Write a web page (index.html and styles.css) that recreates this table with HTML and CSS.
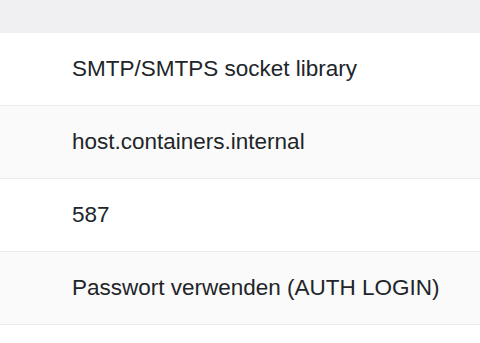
FILE: index.html
```html
<!DOCTYPE html>
<html lang="de">
<head>
    <meta charset="UTF-8">
    <meta name="viewport" content="width=device-width, initial-scale=1.0">
    <title>SMTP Einstellungen</title>
    <link rel="stylesheet" href="styles.css">
</head>
<body>
    <div class="table-head"></div>
    <div class="settings-table">
        <div class="row">SMTP/SMTPS socket library</div>
        <div class="row striped">host.containers.internal</div>
        <div class="row">587</div>
        <div class="row striped">Passwort verwenden (AUTH LOGIN)</div>
    </div>
</body>
</html>
```

FILE: styles.css
```css
body {
    margin: 0;
    font-family: "Liberation Sans", Arial, sans-serif;
    font-size: 22.5px;
    color: #212529;
    background: #fff;
}
.table-head {
    height: 33px;
    background: #f0f0f2;
}
.row {
    height: 72px;
    display: flex;
    align-items: center;
    padding-left: 72px;
    border-bottom: 1px solid #ececec;
    background: #fff;
}
.row.striped {
    background: #fafafa;
}
```
